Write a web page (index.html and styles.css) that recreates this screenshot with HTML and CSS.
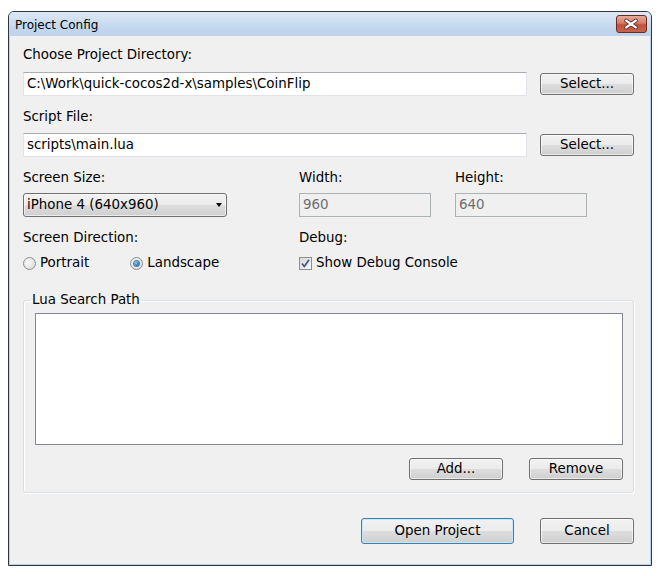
FILE: index.html
```html
<!DOCTYPE html>
<html>
<head>
<meta charset="utf-8">
<title>Project Config</title>
<link rel="stylesheet" href="styles.css">
</head>
<body>
<div class="window">
  <div class="titlebar">
    <span class="title">Project Config</span>
    <div class="close">
      <svg width="31" height="18" viewBox="0 0 31 18">
        <path d="M10.5 5.5 L20.5 12.5 M20.5 5.5 L10.5 12.5" stroke="#5a3b35" stroke-width="4.2" stroke-linecap="round" fill="none"/>
        <path d="M10.5 5.5 L20.5 12.5 M20.5 5.5 L10.5 12.5" stroke="#ffffff" stroke-width="2.2" stroke-linecap="round" fill="none"/>
      </svg>
    </div>
  </div>
  <div class="body">
    <div class="label first">Choose Project Directory:</div>
    <div class="row">
      <div class="input wide">C:\Work\quick-cocos2d-x\samples\CoinFlip</div>
      <div class="btn small">Select...</div>
    </div>
    <div class="label second">Script File:</div>
    <div class="row">
      <div class="input wide">scripts\main.lua</div>
      <div class="btn small">Select...</div>
    </div>

    <div class="grid size-grid">
      <div class="label">Screen Size:</div>
      <div class="label">Width:</div>
      <div class="label">Height:</div>
      <div class="combo">
        <span>iPhone 4 (640x960)</span>
        <span class="arrow"></span>
      </div>
      <div class="input disabled">960</div>
      <div class="input disabled">640</div>
    </div>

    <div class="grid dir-grid">
      <div class="label">Screen Direction:</div>
      <div class="label">Debug:</div>
      <div class="radios">
        <label class="opt"><span class="radio"></span>Portrait</label>
        <label class="opt land"><span class="radio on"></span>Landscape</label>
      </div>
      <label class="opt"><span class="check">
        <svg width="11" height="11" viewBox="0 0 11 11"><path d="M2 5.5 L4.3 8.5 L9 1.8" stroke="#4a5a8a" stroke-width="1.8" fill="none" stroke-linejoin="round"/></svg>
      </span>Show Debug Console</label>
    </div>

    <fieldset class="group">
      <legend>Lua Search Path</legend>
      <div class="listbox"></div>
      <div class="group-actions">
        <div class="btn small">Add...</div>
        <div class="btn small">Remove</div>
      </div>
    </fieldset>

    <div class="footer">
      <div class="btn big default">Open Project</div>
      <div class="btn big cancel">Cancel</div>
    </div>
  </div>
</div>
</body>
</html>
```

FILE: styles.css
```css
* { box-sizing: border-box; margin: 0; padding: 0; }
html, body { background: #ffffff; }
body {
  font-family: "DejaVu Sans", Verdana, sans-serif;
  font-size: 13.4px;
  line-height: 16px;
  color: #000;
  padding: 11px 8px 0 8px;
}
.window {
  width: 644px;
  height: 555px;
  border: 1px solid #30363d;
  border-radius: 6px 6px 0 0;
  background: #b9d1ea;
  display: flex;
  flex-direction: column;
}
.titlebar {
  height: 24px;
  flex: none;
  display: flex;
  align-items: flex-start;
  justify-content: space-between;
  padding: 0 4px 0 6px;
  border-radius: 5px 5px 0 0;
  background: linear-gradient(#dfe9f5, #c4d8ee 60%, #bcd3ec);
}
.title {
  font-size: 12px;
  line-height: 16px;
  margin-top: 5px;
  color: #000;
}
.close {
  margin-top: 3px;
  width: 31px;
  height: 18px;
  border: 1px solid #6b2b22;
  border-radius: 3px;
  background: linear-gradient(#e9a99b, #d47c68 45%, #c2503a 55%, #c8654e);
  display: flex;
}
.close svg { margin: -1px 0 0 -1px; }
.body {
  flex: 1;
  margin: 0 1px 1px 1px;
  background: #f0f0f0;
  padding: 11px 16px 0 13px;
  display: flex;
  flex-direction: column;
}
.label { height: 16px; white-space: nowrap; }
.row {
  display: flex;
  gap: 13px;
  margin-top: 9px;
  align-items: flex-start;
}
.row + .label.second { margin-top: 13px; }
.label.second + .row { margin-top: 8px; }
.input {
  height: 24px;
  background: #fff;
  border: 1px solid #e2e3ea;
  border-top-color: #abadb3;
  border-left-color: #e2e3ea;
  padding: 0 3px;
  line-height: 22px;
  white-space: nowrap;
  overflow: hidden;
}
.input.wide { width: 504px; }
.input.disabled {
  width: 132px;
  background: #f0f0f0;
  border: 1px solid #adb2b5;
  color: #6d6d6d;
}
.btn {
  border: 1px solid #707070;
  border-radius: 3px;
  background: linear-gradient(#f2f2f2, #ebebeb 48%, #dddddd 52%, #cfcfcf);
  box-shadow: inset 0 0 0 1px rgba(255,255,255,0.6);
  text-align: center;
  white-space: nowrap;
}
.btn.small {
  width: 94px;
  height: 22px;
  line-height: 20px;
  margin-top: 1px;
}
.btn.big {
  height: 26px;
  line-height: 24px;
}
.btn.default {
  width: 153px;
  border-color: #3c7fb1;
  box-shadow: inset 0 0 0 1px #c6e6fa;
}
.btn.cancel { width: 94px; }

.grid {
  display: grid;
  grid-template-columns: 276px 156px 1fr;
}
.size-grid { margin-top: 13px; row-gap: 7px; }
.combo {
  width: 204px;
  height: 24px;
  border: 1px solid #707070;
  border-radius: 3px;
  background: linear-gradient(#f2f2f2, #ebebeb 48%, #dddddd 52%, #cfcfcf);
  box-shadow: inset 0 0 0 1px rgba(255,255,255,0.6);
  display: flex;
  align-items: center;
  justify-content: space-between;
  padding: 0 4px 0 3px;
  white-space: nowrap;
}
.arrow {
  width: 0; height: 0;
  border-left: 3.5px solid transparent;
  border-right: 3.5px solid transparent;
  border-top: 4px solid #000;
}
.dir-grid {
  margin-top: 13px;
  row-gap: 9px;
  grid-template-columns: 276px 1fr;
}
.radios { display: flex; }
.opt {
  display: flex;
  align-items: center;
  height: 16px;
  white-space: nowrap;
}
.opt.land { margin-left: 41px; }
.radio {
  width: 13px; height: 13px;
  border-radius: 50%;
  border: 1px solid #8e8f8f;
  background: radial-gradient(circle at 40% 40%, #fbfbfb, #e4e4e4 60%, #cfcfcf);
  margin-right: 4px;
  display: flex;
  align-items: center;
  justify-content: center;
}
.radio.on::after {
  content: "";
  width: 5px; height: 5px;
  border-radius: 50%;
  background: radial-gradient(circle at 40% 35%, #8fd0f5, #2a6aa8 70%, #1d4f86);
  box-shadow: 0 0 0 1px #4a86b8;
}
.check {
  width: 13px; height: 13px;
  border: 1px solid #8e8f8f;
  background: linear-gradient(135deg, #d8d8d8, #f8f8f8);
  margin-right: 4px;
  display: flex;
  align-items: center;
  justify-content: center;
}
.check svg { display: block; }

.group {
  margin-top: 21px;
  border: 1px solid #d5dfe5;
  border-radius: 3px;
  box-shadow: inset 1px 1px 0 #fff, 1px 1px 0 #fff;
  padding: 0 10px 12px 11px;
}
.group legend {
  margin-left: -5px;
  padding: 0 2px;
  line-height: 16px;
}
.listbox {
  margin-top: 5px;
  height: 132px;
  background: #fff;
  border: 1px solid #828790;
}
.group-actions {
  display: flex;
  justify-content: flex-end;
  gap: 26px;
  margin-top: 12px;
}
.footer {
  display: flex;
  justify-content: flex-end;
  gap: 26px;
  margin-top: 25px;
}
```
